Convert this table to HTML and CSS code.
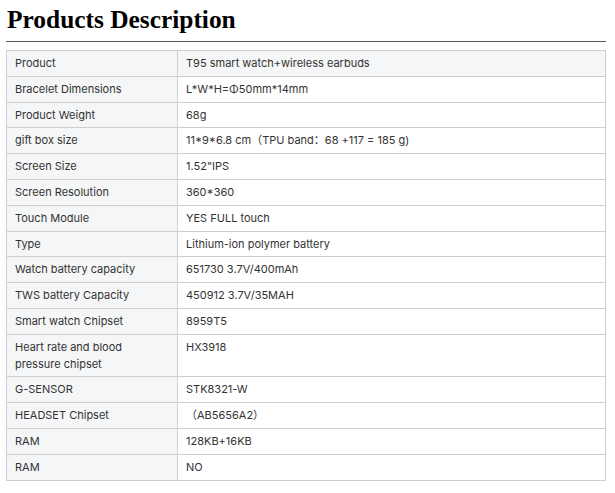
FILE: index.html
```html
<!DOCTYPE html>
<html>
<head>
<meta charset="utf-8">
<link rel="stylesheet" href="styles.css">
</head>
<body>
<div class="page">
  <h2 class="title">Products Description</h2>
  <table class="spec">
    <tr class="head"><td class="k">Product</td><td class="v">T95 smart watch+wireless earbuds</td></tr>
    <tr><td class="k">Bracelet Dimensions</td><td class="v">L*W*H=Φ50mm*14mm</td></tr>
    <tr><td class="k">Product Weight</td><td class="v">68g</td></tr>
    <tr><td class="k">gift box size</td><td class="v">11*9*6.8 cm（TPU band：68 +117 = 185 g)</td></tr>
    <tr><td class="k">Screen Size</td><td class="v">1.52"IPS</td></tr>
    <tr><td class="k">Screen Resolution</td><td class="v">360*360</td></tr>
    <tr><td class="k">Touch Module</td><td class="v">YES FULL touch</td></tr>
    <tr><td class="k">Type</td><td class="v">Lithium-ion polymer battery</td></tr>
    <tr><td class="k">Watch battery capacity</td><td class="v">651730 3.7V/400mAh</td></tr>
    <tr><td class="k">TWS battery Capacity</td><td class="v">450912 3.7V/35MAH</td></tr>
    <tr><td class="k">Smart watch Chipset</td><td class="v">8959T5</td></tr>
    <tr><td class="k">Heart rate and blood<br>pressure chipset</td><td class="v top">HX3918</td></tr>
    <tr><td class="k">G-SENSOR</td><td class="v">STK8321-W</td></tr>
    <tr><td class="k">HEADSET Chipset</td><td class="v">（AB5656A2）</td></tr>
    <tr><td class="k">RAM</td><td class="v">128KB+16KB</td></tr>
    <tr><td class="k">RAM</td><td class="v">NO</td></tr>
  </table>
</div>
</body>
</html>
```
FILE: styles.css
```css
html, body { margin: 0; padding: 0; background: #fff; }
.page { padding: 0 9px 0 6px; }
.title {
  margin: 0;
  padding: 4px 0 7px 1px;
  font-family: "Liberation Serif", serif;
  font-size: 25.4px;
  font-weight: bold;
  color: #000;
  line-height: 30px;
  border-bottom: 1px solid #555;
}
.spec {
  margin-top: 8px;
  width: 100%;
  border-collapse: collapse;
  font-family: Inter, "Noto Sans CJK SC", sans-serif;
  font-size: 11px;
  color: #333;
}
.spec td {
  border: 1px solid #cfcfcf;
  padding: 4px 8px;
  line-height: 16.8px;
  vertical-align: top;
}
.spec .k { width: 154px; background: #f5f6f7; }
.spec .v { background: #fff; }
.spec .head td { background: #f5f6f7; }
```
